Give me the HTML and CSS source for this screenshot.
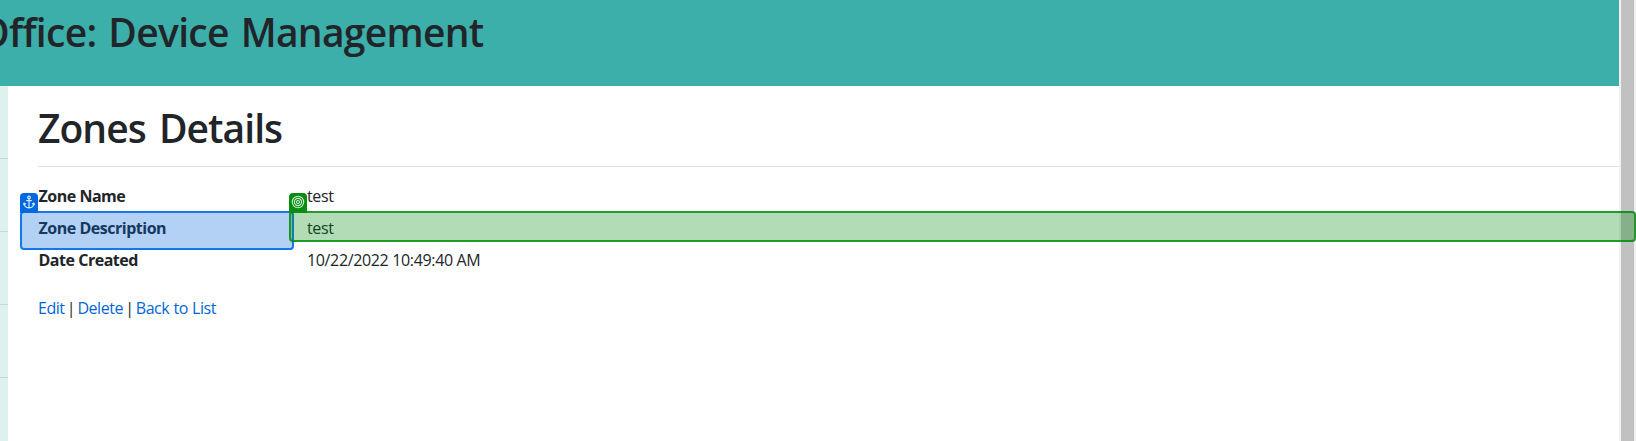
FILE: index.html
```
<!DOCTYPE html>
<html lang="en">
<head>
<meta charset="utf-8">
<title>Zones Details</title>
<link rel="stylesheet" href="styles.css">
</head>
<body>
<div class="app">
  <div class="page">
    <header class="banner"><h1 class="banner-title">Office: Device Management</h1></header>
    <div class="body">
      <aside class="sidebar"><i class="nav-item"></i><i class="nav-item"></i><i class="nav-item"></i><i class="nav-item"></i></aside>
      <main class="content">
        <h1 class="title">Zones Details</h1>
        <hr class="rule">
        <dl class="details">
          <dt>Zone Name</dt><dd>test</dd>
          <dt>Zone Description</dt><dd>test</dd>
          <dt>Date Created</dt><dd>10/22/2022 10:49:40 AM</dd>
        </dl>
        <nav class="links"><a href="#">Edit</a> | <a href="#">Delete</a> | <a href="#">Back to List</a></nav>
      </main>
    </div>
  </div>
  <div class="scrollbar"><div class="thumb"></div></div>
</div>
<div class="mark anchor">
  <span class="badge"><svg width="18" height="18" viewBox="0 0 18 18" fill="none" stroke="#d8e9ff" stroke-width="1.2" stroke-linecap="round" stroke-linejoin="round"><circle cx="9" cy="4.4" r="1.3"/><path d="M9 5.8V14.6M6.6 7.6h4.8M4 10.2c.2 3 2.300 4.500 5 4.700 2.700-.2 4.800-1.700 5-4.700M3.700 11.700L4 10.100l1.500.8M14.300 11.700L14 10.100l-1.500.8"/></svg></span>
</div>
<div class="mark target">
  <span class="badge"><svg width="18" height="18" viewBox="0 0 18 18" fill="none" stroke="#cdeccd" stroke-width="1.1"><circle cx="9" cy="9" r="5.700"/><circle cx="9" cy="9" r="3.600"/><circle cx="9" cy="9" r="1.500"/></svg></span>
</div>
</body>
</html>
```
FILE: styles.css
```
* { box-sizing: border-box; }
body {
  margin: 0;
  height: 441px;
  overflow: hidden;
  position: relative;
  background: #fff;
  color: #212529;
  font: 16px/24px "Segoe UI", "Open Sans", "Noto Sans", sans-serif;
}
.app { display: flex; height: 441px; }
.page { flex: 1; display: flex; flex-direction: column; min-width: 0; }
.banner { height: 86px; background: #3cafaa; padding-top: 8px; overflow: hidden; }
.banner-title, .title { margin: 0; font-size: 39px; line-height: 48px; font-weight: 600; white-space: nowrap; }
.banner-title { margin-left: -21px; letter-spacing: -.7px; word-spacing: 2.500px; }
.body { flex: 1; display: flex; }
.sidebar { width: 8px; background: #ddf1ef; }
.nav-item { display: block; height: 73px; border-bottom: 1px solid #c4d9d7; }
.content { flex: 1; padding: 18px 0 0 30px; }
.title { letter-spacing: -.95px; word-spacing: 4px; }
.rule { margin: 14px 0 17px; border: 0; height: 1px; background: #e0e1e2; }
.details { margin: 0; display: grid; grid-template-columns: 269px 1fr; row-gap: 8px; }
.details dt { padding-left: .5px; font-weight: 700; letter-spacing: -.48px; }
.details dd { margin: 0; letter-spacing: -.35px; }
.links { margin-top: 24px; letter-spacing: -.45px; word-spacing: -1.500px; }
.links a { color: #0366d6; text-decoration: none; word-spacing: .5px; }
.scrollbar { width: 17px; padding: 0 2px; background: #f1f1f1; }
.thumb { width: 13px; height: 100%; background: #c1c1c1; }
.mark { position: absolute; border: 2px solid; border-radius: 4px; }
.anchor { left: 20px; top: 211px; width: 274px; height: 39px; border-color: #1677e8; background: rgba(0, 103, 223, .3); }
.target { left: 289px; top: 211px; width: 1347px; height: 31px; border-color: rgba(0, 138, 9, .8); background: rgba(0, 138, 9, .3); }
.badge { position: absolute; left: -2px; top: -20px; width: 18px; height: 20px; border-radius: 4px 4px 0 0; }
.badge svg { display: block; }
.anchor .badge { background: #0068e0; }
.target .badge { background: #088d10; }
```
